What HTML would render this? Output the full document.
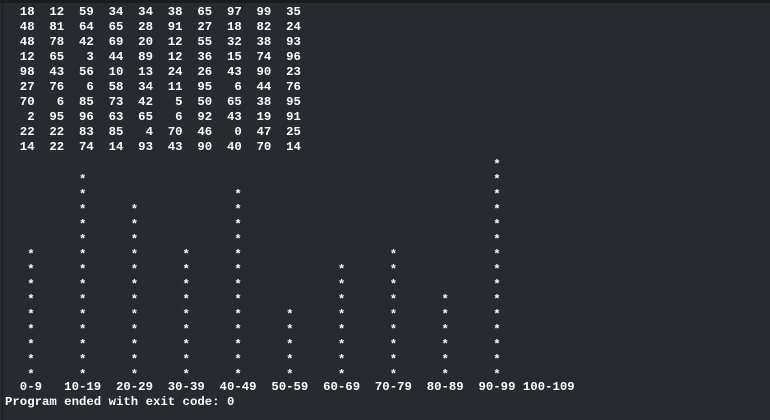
<!DOCTYPE html>
<html><head><meta charset="utf-8"><style>
html,body{margin:0;padding:0;}
body{width:770px;height:420px;background:#292a30;position:relative;overflow:hidden;}
.top{position:absolute;left:0;top:0;width:770px;height:3px;background:#1b1b1e;}
.left{position:absolute;left:2px;top:3px;width:1px;height:417px;background:#1b1b1e;}
.t{position:absolute;left:5px;top:5px;margin:0;font-family:"Liberation Mono",monospace;font-weight:bold;font-size:12.33px;line-height:15px;color:#fff;white-space:pre;}
.c{position:absolute;font-family:"Liberation Mono",monospace;font-weight:bold;font-size:12.33px;line-height:15px;color:#fff;white-space:pre;margin-top:3px;}
</style></head><body>
<div class="top"></div><div class="left"></div>
<pre class="t">  18  12  59  34  34  38  65  97  99  35
  48  81  64  65  28  91  27  18  82  24
  48  78  42  69  20  12  55  32  38  93
  12  65   3  44  89  12  36  15  74  96
  98  43  56  10  13  24  26  43  90  23
  27  76   6  58  34  11  95   6  44  76
  70   6  85  73  42   5  50  65  38  95
   2  95  96  63  65   6  92  43  19  91
  22  22  83  85   4  70  46   0  47  25
  14  22  74  14  93  43  90  40  70  14
<span style="position:relative;display:block;height:225px"><span class="c" style="left:3ch;top:90px">*
*
*
*
*
*
*
*
*</span><span class="c" style="left:10ch;top:15px">*
*
*
*
*
*
*
*
*
*
*
*
*
*</span><span class="c" style="left:17ch;top:45px">*
*
*
*
*
*
*
*
*
*
*
*</span><span class="c" style="left:24ch;top:90px">*
*
*
*
*
*
*
*
*</span><span class="c" style="left:31ch;top:30px">*
*
*
*
*
*
*
*
*
*
*
*
*</span><span class="c" style="left:38ch;top:150px">*
*
*
*
*</span><span class="c" style="left:45ch;top:105px">*
*
*
*
*
*
*
*</span><span class="c" style="left:52ch;top:90px">*
*
*
*
*
*
*
*
*</span><span class="c" style="left:59ch;top:135px">*
*
*
*
*
*</span><span class="c" style="left:66ch;top:0px">*
*
*
*
*
*
*
*
*
*
*
*
*
*
*</span></span>  0-9   10-19  20-29  30-39  40-49  50-59  60-69  70-79  80-89  90-99 100-109
Program ended with exit code: 0</pre>
</body></html>
